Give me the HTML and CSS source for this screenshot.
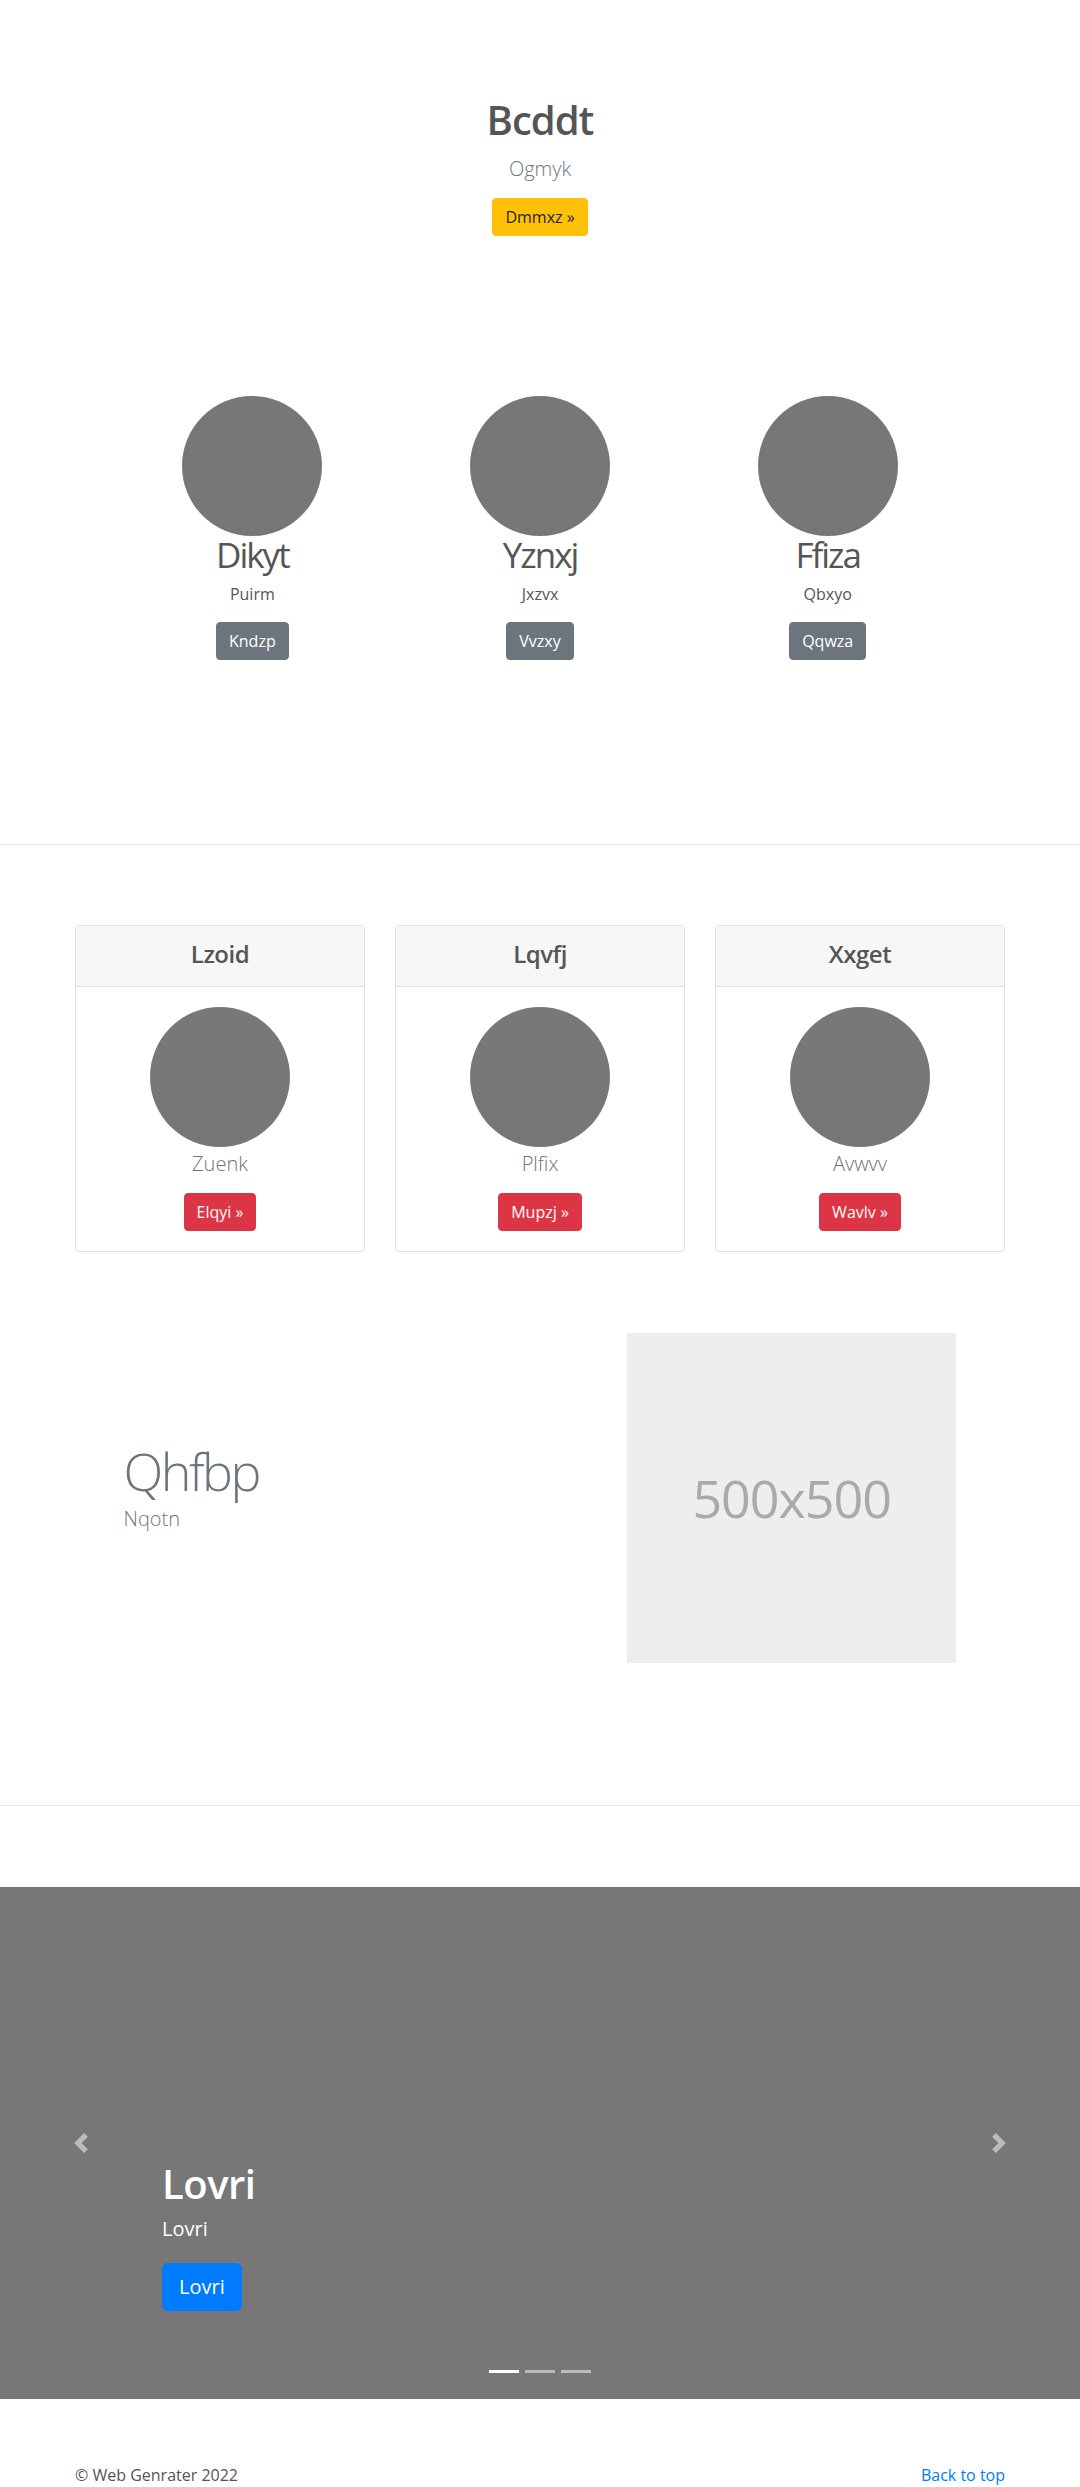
FILE: index.html
```html
<!DOCTYPE html>
<html lang="en">
<head>
<meta charset="utf-8">
<title>Web Genrater</title>
<link rel="stylesheet" href="styles.css">
</head>
<body>
<section class="hero">
  <h1 class="hero-title">Bcddt</h1>
  <p class="hero-lead">Ogmyk</p>
  <a class="btn btn-warning" href="#">Dmmxz &raquo;</a>
</section>

<section class="team">
  <div class="member">
    <div class="avatar"></div>
    <h2 class="member-name">Dikyt</h2>
    <p class="member-role">Puirm</p>
    <a class="btn btn-secondary" href="#">Kndzp</a>
  </div>
  <div class="member">
    <div class="avatar"></div>
    <h2 class="member-name">Yznxj</h2>
    <p class="member-role">Jxzvx</p>
    <a class="btn btn-secondary" href="#">Vvzxy</a>
  </div>
  <div class="member">
    <div class="avatar"></div>
    <h2 class="member-name">Ffiza</h2>
    <p class="member-role">Qbxyo</p>
    <a class="btn btn-secondary" href="#">Qqwza</a>
  </div>
</section>

<hr class="divider divider-top">

<section class="cards">
  <div class="card">
    <div class="card-header"><h4 class="card-title">Lzoid</h4></div>
    <div class="card-body">
      <div class="avatar"></div>
      <p class="card-text">Zuenk</p>
      <a class="btn btn-danger" href="#">Elqyi &raquo;</a>
    </div>
  </div>
  <div class="card">
    <div class="card-header"><h4 class="card-title">Lqvfj</h4></div>
    <div class="card-body">
      <div class="avatar"></div>
      <p class="card-text">Plfix</p>
      <a class="btn btn-danger" href="#">Mupzj &raquo;</a>
    </div>
  </div>
  <div class="card">
    <div class="card-header"><h4 class="card-title">Xxget</h4></div>
    <div class="card-body">
      <div class="avatar"></div>
      <p class="card-text">Avwvv</p>
      <a class="btn btn-danger" href="#">Wavlv &raquo;</a>
    </div>
  </div>
</section>

<section class="feature">
  <div class="feature-text">
    <h2 class="feature-heading">Qhfbp</h2>
    <p class="feature-lead">Nqotn</p>
  </div>
  <div class="feature-media">
    <div class="placeholder">500x500</div>
  </div>
</section>

<hr class="divider divider-mid">

<section class="carousel">
  <div class="carousel-caption">
    <h1 class="caption-title">Lovri</h1>
    <p class="caption-text">Lovri</p>
    <a class="btn btn-lg btn-primary" href="#">Lovri</a>
  </div>
  <a class="carousel-control prev" href="#">
    <svg width="20" height="20" viewBox="0 0 8 8" fill="#fff"><path d="M5.25 0l-4 4 4 4 1.5-1.5-2.5-2.5 2.5-2.5-1.5-1.5z"/></svg>
  </a>
  <a class="carousel-control next" href="#">
    <svg width="20" height="20" viewBox="0 0 8 8" fill="#fff"><path d="M2.75 0l-1.5 1.5 2.5 2.5-2.5 2.5 1.5 1.5 4-4-4-4z"/></svg>
  </a>
  <ol class="indicators">
    <li class="indicator active"></li>
    <li class="indicator"></li>
    <li class="indicator"></li>
  </ol>
</section>

<footer class="footer">
  <p class="footer-copy">&copy; Web Genrater 2022</p>
  <p class="footer-link"><a href="#">Back to top</a></p>
</footer>
</body>
</html>
```

FILE: styles.css
```css
* { box-sizing: border-box; }

body {
  margin: 0;
  font-family: "Open Sans", "Noto Sans", sans-serif;
  font-size: 16px;
  line-height: 1.5;
  color: #555;
  background: #fff;
}

a { color: #007bff; text-decoration: none; }

.btn {
  display: inline-block;
  font-size: 16px;
  line-height: 24px;
  padding: 6px 12px;
  border: 1px solid transparent;
  border-radius: 4px;
  font-weight: 400;
  vertical-align: top;
}
.btn-warning { background: #ffc107; border-color: #ffc107; color: #212529; }
.btn-secondary { background: #6c757d; border-color: #6c757d; color: #fff; }
.btn-danger { background: #dc3545; border-color: #dc3545; color: #fff; }
.btn-primary { background: #007bff; border-color: #007bff; color: #fff; }
.btn-lg { font-size: 20px; line-height: 30px; padding: 8px 16px; border-radius: 6px; }

/* hero */
.hero { text-align: center; padding-top: 96px; }
.hero-title {
  font-size: 40px; font-weight: 600; line-height: 48px;
  margin: 0 0 10px; color: #555; letter-spacing: -1px;
}
.hero-lead {
  font-size: 20px; font-weight: 300; line-height: 30px;
  margin: 0 0 14px; color: #6c757d;
}

/* team */
.team {
  width: 863px;
  margin: 160px auto 0;
  display: grid;
  grid-template-columns: repeat(3, 1fr);
  text-align: center;
}
.avatar {
  width: 140px; height: 140px; border-radius: 50%;
  background: #777; margin: 0 auto;
}
.member-name {
  font-size: 35px; font-weight: 400; line-height: 38px;
  margin: 0 0 8px; color: #555; letter-spacing: -2px;
}
.member-role { font-size: 16px; line-height: 24px; margin: 0 0 16px; }

.divider { border: 0; border-top: 1px solid #e4e4e4; margin: 0; height: 0; }
.divider-top { margin-top: 184px; }
.divider-mid { margin-top: 142px; }

/* cards */
.cards {
  width: 930px;
  margin: 80px auto 0;
  display: grid;
  grid-template-columns: repeat(3, 1fr);
  gap: 30px;
}
.card {
  border: 1px solid #dfdfdf;
  border-radius: 4px;
  text-align: center;
  overflow: hidden;
}
.card-header {
  background: #f7f7f7;
  border-bottom: 1px solid #dfdfdf;
  padding: 10px 20px 14px;
}
.card-title { font-size: 24px; font-weight: 600; line-height: 36px; margin: 0; color: #555; letter-spacing: -0.5px; }
.card-body { padding: 20px; }
.card-text {
  font-size: 20px; font-weight: 300; line-height: 30px;
  margin: 2px 0 14px; color: #6c757d;
}

/* featurette */
.feature {
  width: 863px;
  margin: 81px auto 0;
  display: grid;
  grid-template-columns: 7fr 5fr;
  align-items: center;
}
.feature-text, .feature-media { padding: 0 15px; }
.feature-heading {
  font-size: 52px; font-weight: 300; line-height: 62px;
  margin: 0 0 2px; color: #6c757d; letter-spacing: -2.5px;
}
.feature-lead {
  font-size: 20px; font-weight: 300; line-height: 30px;
  margin: 0 0 22px; color: #6c757d;
}
.placeholder {
  width: 100%;
  aspect-ratio: 1 / 1;
  background: #eee;
  color: #aaa;
  display: flex;
  align-items: center;
  justify-content: center;
  font-size: 52px;
  letter-spacing: -1px;
}

/* carousel */
.carousel {
  position: relative;
  margin-top: 81px;
  height: 512px;
  background: #777;
  display: flex;
  flex-direction: column;
  justify-content: flex-end;
  padding: 0 162px 88px;
  color: #fff;
}
.carousel-caption { display: flex; flex-direction: column; align-items: flex-start; }
.caption-title { font-size: 40px; font-weight: 600; line-height: 48px; margin: 0 0 6px; letter-spacing: -0.5px; }
.caption-text { font-size: 20px; line-height: 30px; margin: 0 0 19px; }

.carousel-control {
  position: absolute;
  top: 0; bottom: 0;
  width: 162px;
  display: flex;
  align-items: center;
  justify-content: center;
  opacity: 0.5;
}
.carousel-control.prev { left: 0; }
.carousel-control.next { right: 0; }

.indicators {
  position: absolute;
  left: 0; right: 0; bottom: 26px;
  margin: 0; padding: 0;
  list-style: none;
  display: flex;
  justify-content: center;
}
.indicator {
  width: 30px; height: 3px; margin: 0 3px;
  background: rgba(255, 255, 255, 0.5);
}
.indicator.active { background: #fff; }

/* footer */
.footer {
  width: 930px;
  margin: 64px auto 0;
  display: flex;
  justify-content: space-between;
}
.footer p { margin: 0 0 16px; font-size: 16px; line-height: 24px; }
.footer-copy { color: #555; }
```
